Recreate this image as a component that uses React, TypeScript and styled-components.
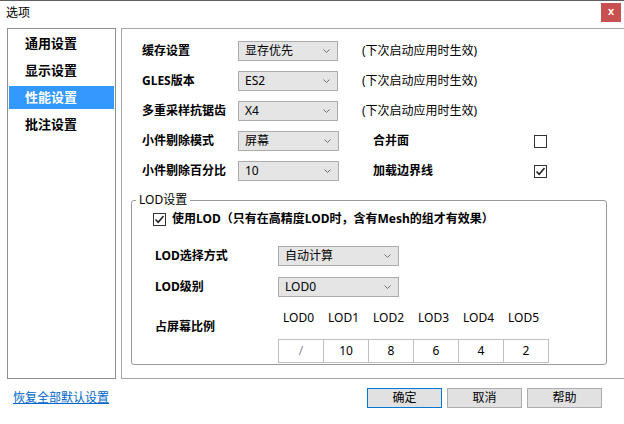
import styled, { createGlobalStyle } from 'styled-components';

const GlobalStyle = createGlobalStyle`
  html, body {
    margin: 0;
    padding: 0;
    background: #fff;
  }
  body {
    font-family: "Noto Sans", "Noto Sans CJK SC", sans-serif;
    font-size: 12px;
    color: #000;
  }
  * {
    box-sizing: border-box;
  }
`;

const Window = styled.div`
  width: 624px;
  height: 424px;
  overflow: hidden;
  border-top: 1px solid #5f5f5f;
  background: #fff;
  display: flex;
  flex-direction: column;
`;

const TitleBar = styled.div`
  height: 27px;
  flex: 0 0 27px;
  display: flex;
  justify-content: space-between;
  align-items: flex-start;
  padding-left: 6px;
`;

const Title = styled.div`
  margin-top: 4px;
  line-height: 16px;
`;

const CloseButton = styled.div`
  width: 20px;
  height: 19px;
  margin: 2px 3px 0 0;
  background: #c75050;
  color: #fff;
  font-family: "Liberation Sans", sans-serif;
  font-weight: bold;
  font-size: 11px;
  line-height: 17px;
  text-align: center;
`;

const Body = styled.div`
  height: 351px;
  flex: 0 0 351px;
  display: flex;
  gap: 5px;
  padding-left: 7px;
`;

const Nav = styled.div`
  width: 109px;
  flex: 0 0 109px;
  border: 1px solid #8e8e8e;
  padding: 3px 1px;
`;

const NavItem = styled.div<{ $active?: boolean }>`
  height: 23px;
  margin-bottom: 4px;
  padding-left: 16px;
  line-height: 23px;
  font-size: 13px;
  font-weight: bold;
  background: ${p => (p.$active ? '#3399ff' : 'transparent')};
  color: ${p => (p.$active ? '#fff' : '#000')};
`;

const Panel = styled.div`
  flex: 0 0 510px;
  border: 1px solid #a6a6a6;
  padding: 12px 0 0 9px;
`;

const Settings = styled.div`
  padding-left: 11px;
  display: flex;
  flex-direction: column;
  gap: 10px;
`;

const Row = styled.div`
  display: flex;
  align-items: center;
  height: 20px;
`;

const Label = styled.div<{ $width: number; $indent?: number }>`
  width: ${p => p.$width}px;
  flex: 0 0 ${p => p.$width}px;
  padding-left: ${p => p.$indent ?? 0}px;
  font-weight: bold;
  line-height: 16px;
  white-space: nowrap;
`;

const SelectBox = styled.div<{ $width: number }>`
  width: ${p => p.$width}px;
  height: 20px;
  border: 1px solid #acacac;
  background: #e5e5e5;
  display: flex;
  align-items: center;
  justify-content: space-between;
  padding: 0 7px 0 6px;
  line-height: 18px;
`;

const Note = styled.div`
  margin-left: 24px;
  line-height: 16px;
`;

const CheckLabel = styled.div`
  margin-left: 34px;
  width: 161px;
  font-weight: bold;
  line-height: 16px;
`;

const CheckBoxBox = styled.div`
  width: 13px;
  height: 13px;
  border: 1px solid #333;
  background: #fff;
  display: flex;
  align-items: center;
  justify-content: center;
`;

const Group = styled.fieldset`
  width: 476px;
  margin: 11px 0 0 0;
  padding: 3px 0 1px 4px;
  border: 1px solid #9a9a9a;
  border-radius: 3px;
  min-width: 0;
`;

const Legend = styled.legend`
  padding: 0 3px;
  line-height: 16px;
  font-size: 12px;
`;

const GroupBody = styled.div`
  padding-left: 17px;
`;

const UseLodRow = styled.div`
  display: flex;
  align-items: center;
  gap: 6px;
  height: 16px;
  font-weight: bold;
  line-height: 16px;
`;

const LodRow = styled.div<{ $top: number }>`
  display: flex;
  align-items: center;
  height: 20px;
  margin-top: ${p => p.$top}px;
`;

const RatioRow = styled.div`
  display: flex;
  margin-top: 13px;
`;

const RatioLabel = styled.div`
  width: 125px;
  flex: 0 0 125px;
  padding: 9px 0 0 2px;
  font-weight: bold;
  line-height: 16px;
`;

const RatioColumn = styled.div`
  display: flex;
  flex-direction: column;
`;

const HeaderRow = styled.div`
  display: flex;
`;

const HeaderCell = styled.div`
  width: 45px;
  padding-left: 5px;
  line-height: 16px;
`;

const CellRow = styled.div`
  display: flex;
  margin-top: 13px;
`;

const Cell = styled.div<{ $muted?: boolean }>`
  width: 46px;
  height: 24px;
  border: 1px solid #bfbfbf;
  margin-left: -1px;
  text-align: center;
  line-height: 22px;
  color: ${p => (p.$muted ? '#8a8a8a' : '#000')};

  &:first-child {
    margin-left: 0;
  }
`;

const Footer = styled.div`
  display: flex;
  align-items: center;
  padding: 9px 22px 0 13px;
`;

const ResetLink = styled.a`
  flex: 1;
  color: #0066cc;
  text-decoration: underline;
  line-height: 16px;
`;

const Buttons = styled.div`
  display: flex;
  gap: 5px;
`;

const Button = styled.div<{ $primary?: boolean }>`
  width: 75px;
  height: 20px;
  border: 1px solid ${p => (p.$primary ? '#0078d7' : '#adadad')};
  background: #e1e1e1;
  text-align: center;
  line-height: 18px;
`;

const Chevron = () => (
  <svg width="7" height="4" viewBox="0 0 7 4">
    <path d="M0.5 0.5 L3.5 3.5 L6.5 0.5" fill="none" stroke="#707070" strokeWidth="1" />
  </svg>
);

const Select = ({ value, width }: { value: string; width: number }) => (
  <SelectBox $width={width}>
    <span>{value}</span>
    <Chevron />
  </SelectBox>
);

const CheckBox = ({ checked }: { checked?: boolean }) => (
  <CheckBoxBox>
    {checked && (
      <svg width="11" height="11" viewBox="0 0 11 11">
        <path d="M1.5 5.5 L4.2 8.2 L9.5 2" fill="none" stroke="#222" strokeWidth="1.6" />
      </svg>
    )}
  </CheckBoxBox>
);

const navItems = ['通用设置', '显示设置', '性能设置', '批注设置'];
const lodLevels = ['LOD0', 'LOD1', 'LOD2', 'LOD3', 'LOD4', 'LOD5'];
const lodRatios = ['/', '10', '8', '6', '4', '2'];
const restartNote = '(下次启动应用时生效)';

export default function App() {
  return (
    <>
      <GlobalStyle />
      <Window>
        <TitleBar>
          <Title>选项</Title>
          <CloseButton>x</CloseButton>
        </TitleBar>

        <Body>
          <Nav>
            {navItems.map(item => (
              <NavItem key={item} $active={item === '性能设置'}>
                {item}
              </NavItem>
            ))}
          </Nav>

          <Panel>
            <Settings>
              <Row>
                <Label $width={96}>缓存设置</Label>
                <Select value="显存优先" width={100} />
                <Note>{restartNote}</Note>
              </Row>
              <Row>
                <Label $width={96}>GLES版本</Label>
                <Select value="ES2" width={100} />
                <Note>{restartNote}</Note>
              </Row>
              <Row>
                <Label $width={96}>多重采样抗锯齿</Label>
                <Select value="X4" width={100} />
                <Note>{restartNote}</Note>
              </Row>
              <Row>
                <Label $width={96}>小件剔除模式</Label>
                <Select value="屏幕" width={101} />
                <CheckLabel>合并面</CheckLabel>
                <CheckBox />
              </Row>
              <Row>
                <Label $width={96}>小件剔除百分比</Label>
                <Select value="10" width={101} />
                <CheckLabel>加载边界线</CheckLabel>
                <CheckBox checked />
              </Row>
            </Settings>

            <Group>
              <Legend>LOD设置</Legend>
              <GroupBody>
                <UseLodRow>
                  <CheckBox checked />
                  使用LOD（只有在高精度LOD时，含有Mesh的组才有效果）
                </UseLodRow>

                <LodRow $top={19}>
                  <Label $width={125} $indent={2}>LOD选择方式</Label>
                  <Select value="自动计算" width={121} />
                </LodRow>
                <LodRow $top={11}>
                  <Label $width={125} $indent={2}>LOD级别</Label>
                  <Select value="LOD0" width={121} />
                </LodRow>

                <RatioRow>
                  <RatioLabel>占屏幕比例</RatioLabel>
                  <RatioColumn>
                    <HeaderRow>
                      {lodLevels.map(level => (
                        <HeaderCell key={level}>{level}</HeaderCell>
                      ))}
                    </HeaderRow>
                    <CellRow>
                      {lodRatios.map((ratio, i) => (
                        <Cell key={i} $muted={ratio === '/'}>{ratio}</Cell>
                      ))}
                    </CellRow>
                  </RatioColumn>
                </RatioRow>
              </GroupBody>
            </Group>
          </Panel>
        </Body>

        <Footer>
          <ResetLink>恢复全部默认设置</ResetLink>
          <Buttons>
            <Button $primary>确定</Button>
            <Button>取消</Button>
            <Button>帮助</Button>
          </Buttons>
        </Footer>
      </Window>
    </>
  );
}
